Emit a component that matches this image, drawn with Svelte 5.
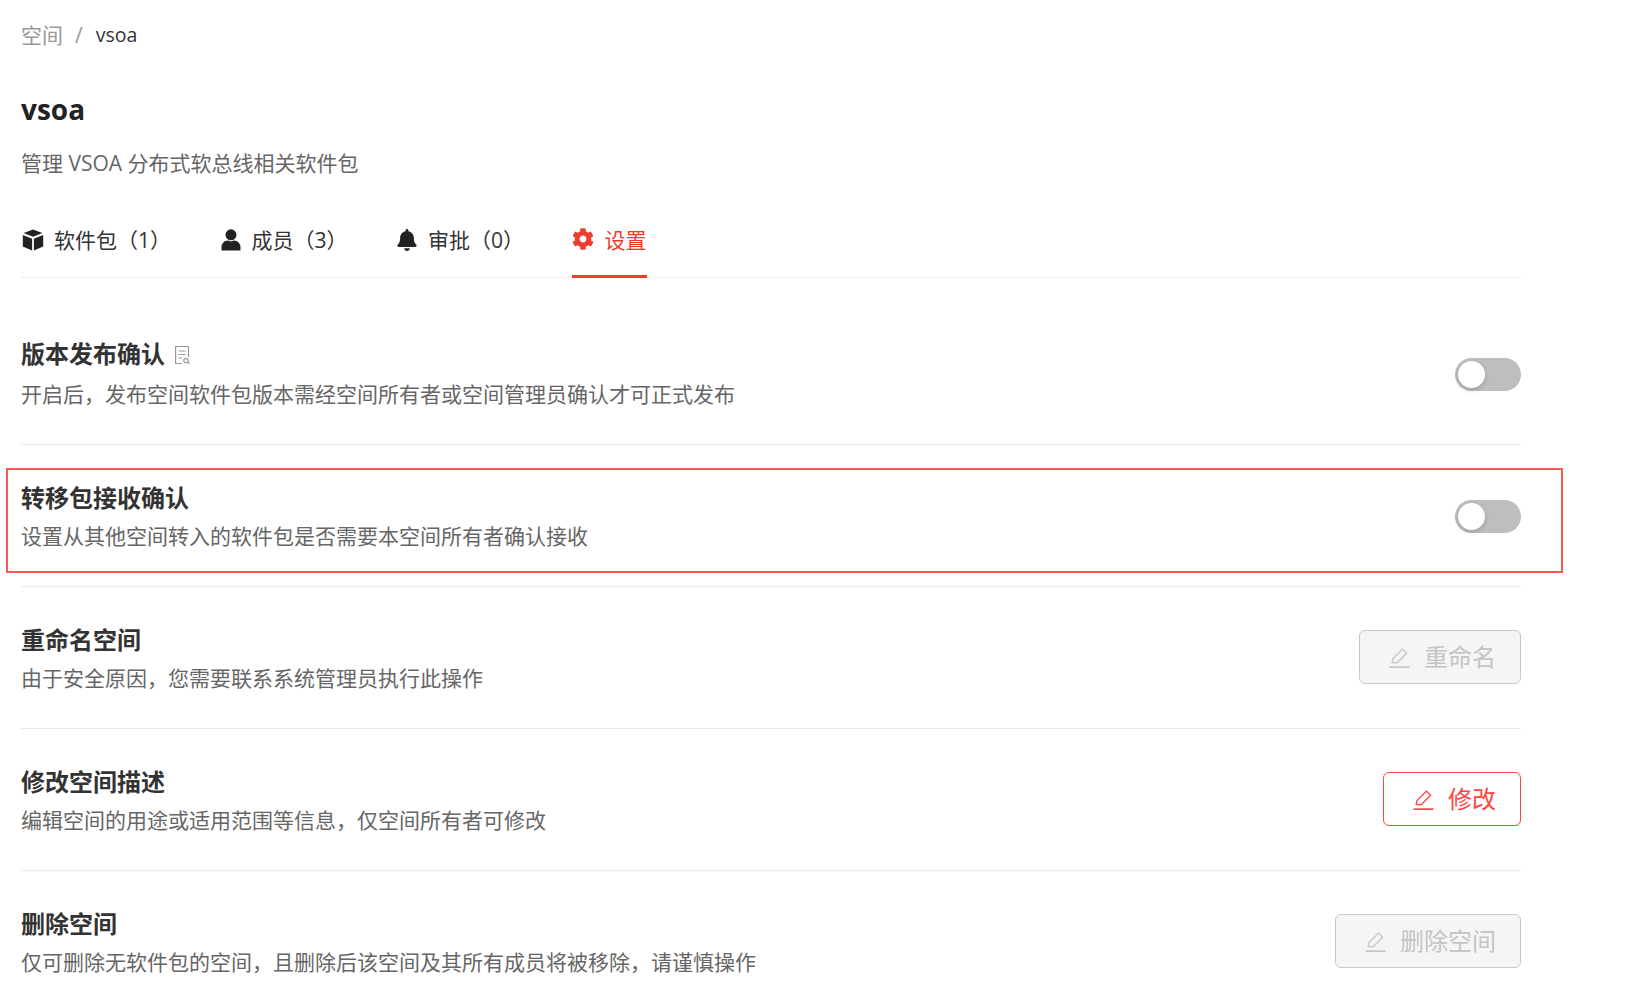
<script>
  const rows = [
    { title: '版本发布确认', desc: '开启后，发布空间软件包版本需经空间所有者或空间管理员确认才可正式发布', kind: 'toggle', doc: true },
    { title: '转移包接收确认', desc: '设置从其他空间转入的软件包是否需要本空间所有者确认接收', kind: 'toggle' },
    { title: '重命名空间', desc: '由于安全原因，您需要联系系统管理员执行此操作', kind: 'off', label: '重命名' },
    { title: '修改空间描述', desc: '编辑空间的用途或适用范围等信息，仅空间所有者可修改', kind: 'on', label: '修改' },
    { title: '删除空间', desc: '仅可删除无软件包的空间，且删除后该空间及其所有成员将被移除，请谨慎操作', kind: 'off', label: '删除空间' }
  ];
</script>

<div class="page">
  <nav class="crumb"><span class="muted">空间</span><span class="muted sep">/</span><span class="cur">vsoa</span></nav>
  <h1>vsoa</h1>
  <p class="lead">管理 VSOA 分布式软总线相关软件包</p>

  <div class="tabs">
    <div class="tab">
      <svg class="ico" viewBox="0 0 22 22"><path d="M11 .5l9.400 3.600L11 7.800 1.600 4.100z"/><path d="M.8 6l9.300 3.700V21.500L.8 17.500z"/><path d="M21.200 6l-9.300 3.700V21.500l9.300-4z"/></svg>
      <span>软件包（1）</span>
    </div>
    <div class="tab">
      <svg class="ico" viewBox="0 0 22 22"><circle cx="11" cy="5.800" r="5.500"/><path d="M1.500 21.500v-3.100c0-4 3-6.800 6.500-6.800 1 .5 2 .8 3 .8s2-.3 3-.8c3.500 0 6.500 2.800 6.500 6.800v3.100z"/></svg>
      <span>成员（3）</span>
    </div>
    <div class="tab">
      <svg class="ico" viewBox="-28 0 504 512"><path d="M224 512c35.32 0 63.97-28.65 63.97-64H160.03c0 35.35 28.65 64 63.97 64zm215.39-149.71c-19.32-20.76-55.47-51.99-55.47-154.29 0-77.7-54.48-139.9-127.94-155.16V32c0-17.67-14.32-32-31.98-32s-31.98 14.33-31.98 32v20.84C118.56 68.1 64.08 130.3 64.08 208c0 102.3-36.15 133.53-55.47 154.29-6 6.45-8.66 14.16-8.61 21.71.11 16.4 12.98 32 32.1 32h383.8c19.12 0 32-15.6 32.1-32 .05-7.55-2.61-15.27-8.61-21.71z"/></svg>
      <span>审批（0）</span>
    </div>
    <div class="tab active">
      <svg class="ico" viewBox="0 0 512 512"><path d="M487.4 315.7l-42.6-24.6c4.3-23.2 4.3-47 0-70.2l42.6-24.6c4.9-2.8 7.1-8.6 5.5-14-11.1-35.6-30-67.8-54.7-94.6-3.8-4.1-10-5.1-14.8-2.3L380.8 110c-17.9-15.4-38.5-27.3-60.8-35.1V25.8c0-5.6-3.9-10.5-9.4-11.7-36.7-8.2-74.3-7.8-109.2 0-5.5 1.2-9.4 6.1-9.4 11.7V75c-22.2 7.9-42.8 19.8-60.8 35.1L88.7 85.500c-4.9-2.8-11-1.9-14.8 2.3-24.7 26.7-43.6 58.9-54.7 94.6-1.7 5.4.6 11.2 5.5 14L67.3 221c-4.3 23.2-4.3 47 0 70.2l-42.6 24.6c-4.9 2.8-7.1 8.6-5.5 14 11.1 35.6 30 67.8 54.7 94.6 3.8 4.1 10 5.1 14.8 2.3l42.6-24.6c17.9 15.4 38.5 27.3 60.8 35.1v49.2c0 5.6 3.9 10.5 9.4 11.7 36.7 8.2 74.3 7.8 109.2 0 5.5-1.2 9.4-6.1 9.4-11.7v-49.2c22.2-7.9 42.8-19.8 60.8-35.1l42.6 24.6c4.9 2.8 11 1.9 14.8-2.3 24.7-26.7 43.6-58.9 54.7-94.6 1.500-5.500-.7-11.300-5.600-14.100zM256 336c-44.100 0-80-35.900-80-80s35.900-80 80-80 80 35.900 80 80-35.900 80-80 80z"/></svg>
      <span>设置</span>
    </div>
  </div>

  <div class="list">
    {#each rows as r}
      <section class="row" class:first={r.doc}>
        <div>
          <h2>{r.title}{#if r.doc}
            <svg class="doc" viewBox="0 0 16 20" fill="none" stroke="currentColor" stroke-width="1.200">
              <path d="M8 18.500H1.600V1.500H14.500V12"/>
              <path d="M4.500 6H11.500M4.500 9.500H11.500M4.500 13H8"/>
              <circle cx="12" cy="15.500" r="2.200"/>
              <path d="M13.600 17.100L15.500 19"/>
            </svg>
          {/if}</h2>
          <p>{r.desc}</p>
        </div>
        {#if r.kind === 'toggle'}
          <span class="switch"><span class="knob"></span></span>
        {:else}
          <button class:on={r.kind === 'on'} disabled={r.kind === 'off'}>
            <svg class="pen" viewBox="0 0 20 20" fill="none" stroke="currentColor" stroke-width="1.300">
              <path d="M3 14.800L3.800 11L12.800 2L16.800 6L7.800 15z"/>
              <path d="M0.500 19.200H19.500" stroke-width="1.600"/>
            </svg>
            <span>{r.label}</span>
          </button>
        {/if}
      </section>
    {/each}
  </div>

  <div class="highlight"></div>
</div>

<style>
  :global(body) {
    margin: 0;
    background: #fff;
  }
  .page {
    position: relative;
    box-sizing: border-box;
    height: 988px;
    overflow: hidden;
    padding: 19px 104px 0 21px;
    font-family: "Open Sans", "Noto Sans CJK SC", sans-serif;
    font-size: 21px;
    line-height: 32px;
    color: #333;
  }
  .crumb {
    display: flex;
    height: 32px;
  }
  .muted {
    color: #999;
  }
  .sep {
    margin: 0 13px 0 12px;
  }
  .cur {
    font-size: 19.500px;
  }
  h1 {
    margin: 38px 0 0;
    font-size: 28px;
    line-height: 40px;
    font-weight: 700;
    color: #222;
  }
  .lead {
    margin: 18px 0 0;
    color: #666;
  }
  .tabs {
    display: flex;
    gap: 47.500px;
    margin-top: 41px;
    border-bottom: 1px solid #eee;
    height: 57px;
  }
  .tab {
    display: flex;
    align-items: flex-start;
    gap: 11px;
    height: 55px;
    line-height: 40px;
    border-bottom: 3px solid transparent;
  }
  .ico {
    width: 22px;
    height: 22px;
    margin-top: 9px;
    margin-left: 1px;
    margin-right: -1px;
    fill: #222;
  }
  .tab.active {
    color: #ee3b2d;
    border-bottom-color: #ee3b2d;
  }
  .tab.active .ico {
    fill: #ee3b2d;
    margin: 8px 0 0;
  }
  .list {
    margin-top: 23px;
  }
  .row {
    display: flex;
    align-items: center;
    justify-content: space-between;
    padding: 35px 0 34px;
    border-bottom: 1px solid #eaeaea;
  }
  .row:last-child {
    border-bottom: 0;
  }
  h2 {
    display: flex;
    align-items: center;
    gap: 9px;
    margin: 0;
    font-size: 24px;
    line-height: 36px;
    font-weight: 600;
    color: #333;
  }
  .first h2 {
    margin-bottom: 6px;
  }
  .doc {
    width: 16px;
    height: 20px;
    margin-top: 2px;
    color: #999;
  }
  .row p {
    margin: 4px 0 0;
    color: #666;
  }
  .switch {
    position: relative;
    display: block;
    width: 66px;
    height: 33px;
    margin-top: 1px;
    border-radius: 17px;
    background: #bebebe;
  }
  .first .switch {
    margin-top: 3px;
  }
  .knob {
    position: absolute;
    left: 3px;
    top: 3px;
    width: 27px;
    height: 27px;
    border-radius: 50%;
    background: #fff;
    box-shadow: 0 2px 5px rgba(0, 35, 11, 0.2);
  }
  button {
    display: flex;
    align-items: center;
    gap: 14px;
    box-sizing: border-box;
    height: 54px;
    margin-top: -2px;
    padding: 0 24px 0 29px;
    border: 1px solid #c8c8c8;
    border-radius: 6px;
    background: #f5f5f5;
    color: #c4c4c4;
    font: inherit;
    font-size: 24px;
  }
  button.on {
    border-color: #f44;
    background: #fff;
    color: #f44;
  }
  .pen {
    width: 21px;
    height: 21px;
  }
  .highlight {
    position: absolute;
    left: 6px;
    top: 468px;
    width: 1557px;
    height: 105px;
    box-sizing: border-box;
    border: 2px solid #f55;
    pointer-events: none;
  }
</style>
